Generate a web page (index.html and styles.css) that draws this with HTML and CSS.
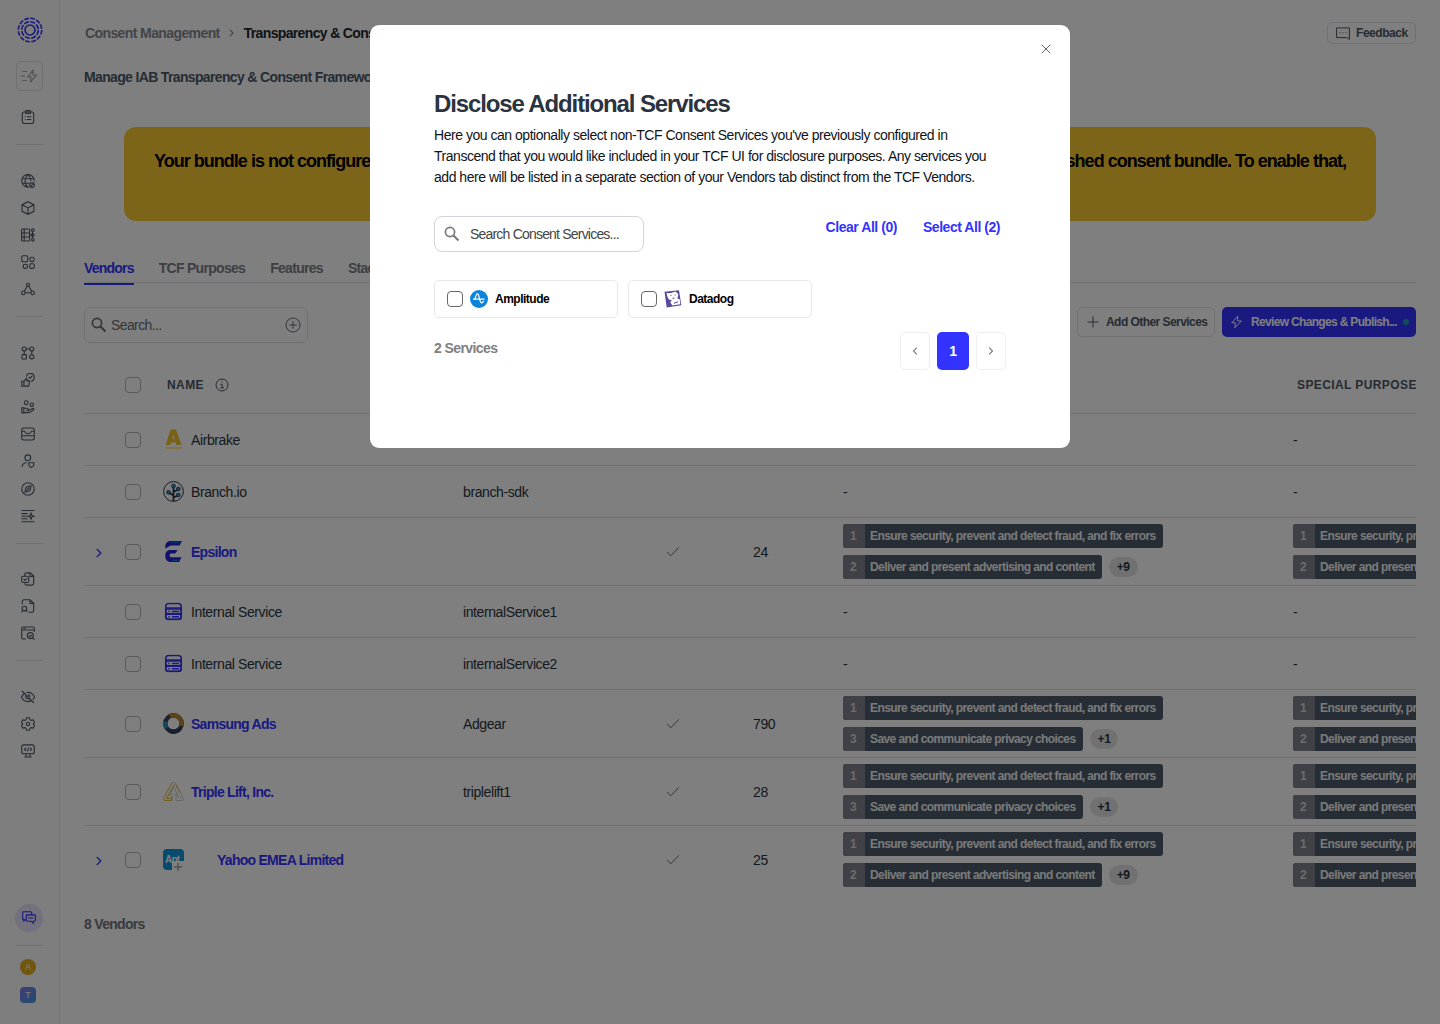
FILE: index.html
```html
<!DOCTYPE html>
<html lang="en">
<head>
  <meta charset="UTF-8">
  <title>Transparency &amp; Consent Framework</title>
  <meta name="viewport" content="width=device-width, initial-scale=1.0">
  <link rel="stylesheet" href="styles.css">
</head>
<body>
  <!-- shared icons -->
  <svg class="defs" width="0" height="0">
    <symbol id="search" viewBox="0 0 16 16"><circle cx="6" cy="6" r="4.6" fill="none" stroke="currentColor" stroke-width="1.7"/><path d="M9.2 9.2L14.5 14.5" fill="none" stroke="currentColor" stroke-width="2"/></symbol>
    <symbol id="bolt" viewBox="0 0 14 14"><path d="M7.8 1.2L1.8 7.8h3.6l-.6 5 6.6-6.8H7.6z" fill="none" stroke="currentColor" stroke-linejoin="round"/></symbol>
    <symbol id="chevron" viewBox="0 0 8 12"><path d="M1.8 2l4 4-4 4" fill="none" stroke="currentColor" stroke-width="1.3"/></symbol>
    <symbol id="tick" viewBox="0 0 14 12"><path d="M1.2 6.2l3.6 3.6 8-8.4" fill="none" stroke="currentColor"/></symbol>
    <symbol id="server" viewBox="0 0 18 18"><g fill="none" stroke="currentColor" stroke-width="1.5"><rect x="1.2" y="1" width="15.6" height="16" rx="3.2"/><rect x="1.2" y="6.4" width="15.6" height="4.8" rx="2.2"/><rect x="1.2" y="11.8" width="15.6" height="5" rx="2.2"/><path d="M1.5 5.6h15M7.5 9h7M7.5 14.3h7M3.8 9h1.4M3.8 14.3h1.4"/></g></symbol>
  </svg>

  <div class="app">
    <aside class="sidebar">
      <svg class="brand" viewBox="0 0 26 26" fill="none" stroke="#3333ff" stroke-width="1.6">
        <circle cx="13" cy="13" r="5"/>
        <circle cx="13" cy="13" r="8.3" stroke-dasharray="5.2 1.32"/>
        <circle cx="13" cy="13" r="11.7" stroke-dasharray="4.6 1.52"/>
      </svg>
      <div class="quick">
        <svg width="20" height="14" viewBox="0 0 20 14" fill="none" stroke="currentColor" stroke-width="1.2"><path d="M2 2.5h5M.5 7h4.5M2 11.5h5M13.4 1L7.8 7.8h3.2l-.6 5.2 6-7h-3.6z" stroke-linejoin="round"/></svg>
      </div>
      <ul class="nav">
        <li><svg viewBox="0 0 14 14"><rect x="1.3" y="2" width="11.4" height="11.5" rx="2"/><rect x="4.3" y=".6" width="5.4" height="2.8" rx="1"/><path d="M3.8 6.7h1M6 6.7h4.3M3.8 9.5h1M6 9.5h4.3"/></svg></li>
      </ul>
      <hr>
      <ul class="nav">
        <li><svg viewBox="0 0 14 14"><path d="M13.3 7.3A6.3 6.3 0 1 0 8 13M7 .7c-4 3.5-4 9 0 12.6M7 .7c2 1.8 3 4 3 6.3M1.2 4.8h11.6M1.2 9.2h7"/><circle cx="11" cy="11" r="2.4"/><path d="M9.6 12.4l2.8-2.8"/></svg></li>
        <li><svg viewBox="0 0 14 14"><path d="M7 .7l5.9 3v6.6L7 13.3l-5.9-3V3.7zM1.1 3.7L7 6.9l5.9-3.2M7 6.9v6.4"/></svg></li>
        <li><svg viewBox="0 0 14 14"><rect x=".6" y="1" width="8" height="12" rx="1"/><path d="M.6 5h8M.6 9h8M3.2 1v12M8.6 7h3M11.5 3.5v7"/><circle cx="11.8" cy="2.2" r="1.3"/><circle cx="11.8" cy="7" r="1.3"/><circle cx="11.8" cy="11.8" r="1.3"/></svg></li>
        <li><svg viewBox="0 0 14 14"><rect x=".8" y=".8" width="6" height="6" rx="1.3"/><rect x="9" y="2.2" width="4" height="4.4" rx="1.6"/><rect x="2.2" y="9.2" width="4.2" height="4.2" rx="1.6"/><rect x="8.7" y="8.8" width="4.6" height="4.6" rx="1.5"/></svg></li>
        <li><svg viewBox="0 0 14 14"><circle cx="7" cy="2.8" r="1.6"/><circle cx="2.4" cy="10.8" r="1.8"/><circle cx="11.6" cy="10.8" r="1.8"/><path d="M6.2 4.3L3.3 9.2M7.8 4.3l2.9 4.9M4.2 10.8h5.6"/></svg></li>
      </ul>
      <hr>
      <ul class="nav">
        <li><svg viewBox="0 0 14 14"><circle cx="3.2" cy="3" r="2"/><circle cx="10.8" cy="3" r="2"/><rect x="1" y="8.6" width="4.4" height="4.4" rx=".6"/><circle cx="10.8" cy="10.8" r="2.1"/><path d="M3.2 5v3.6M10.8 5v3.7M5.2 3h3.6"/></svg></li>
        <li><svg viewBox="0 0 14 14"><path d="M5.3 3.6A4 4 0 1 1 9.8 8.3M7.8 4l1.3 1.2 2.2-2.4M.8 8.2h2.1v5H.8zM2.9 8.6l2.3-3.2c1.2.2 1 1.7.6 2.5h2.7l-.7 5.2H2.9"/></svg></li>
        <li><svg viewBox="0 0 14 14"><circle cx="5.2" cy="2.7" r="1.9"/><circle cx="10.8" cy="4.7" r="1.7"/><path d="M.8 7.7h2v5.2h-2zM2.8 8.3h3l2 1.2c.6.7 0 1.5-1 1.2l-1.5-.4M8 10.2l4-1.9c1.3.2 1.1 1.3.2 1.9l-4 2.5-5.4-.3"/></svg></li>
        <li><svg viewBox="0 0 14 14"><rect x=".7" y="1" width="12.6" height="12" rx="2.2"/><path d="M.9 4.3h2.3c.8 0 1 2.5 3.8 2.5s3-2.5 3.8-2.5h2.3M.7 8.8h12.6"/></svg></li>
        <li><svg viewBox="0 0 14 14"><circle cx="6.8" cy="3.8" r="2.9"/><path d="M1.2 13c0-2.7 1.6-4.3 4.4-4.3M7.8 8.7h5v2c0 1.3-1.2 2.1-2.5 2.7-1.3-.6-2.5-1.4-2.5-2.7z"/></svg></li>
        <li><svg viewBox="0 0 14 14"><circle cx="7" cy="7" r="6.2"/><path d="M10 4L9.2 8l-1.7 1.5L4 10l.8-4 1.7-1.5zM5.5 8.5L8.5 5.5"/></svg></li>
        <li><svg viewBox="0 0 14 14"><path d="M.5 1.5h13M.5 4.6h6M.5 7.2h5M.5 9.8h6M.5 12.8h13M10 4.2l.8 2.2 2.2.8-2.2.8-.8 2.2-.8-2.2L7 7.2l2.2-.8z"/></svg></li>
      </ul>
      <hr>
      <ul class="nav">
        <li><svg viewBox="0 0 14 14"><rect x=".7" y="4.2" width="7" height="6.3" rx="1.5"/><path d="M3.7 4V2.5C3.7 1.5 4.3.9 5.3.9h4l3.4 3.2v7.2c0 1.1-.7 1.8-1.8 1.8H5.5c-1 0-1.7-.6-1.8-1.8M9 1v3.4h3.4M2.6 7.2l1.3 1.3 2.2-2.4"/></svg></li>
        <li><svg viewBox="0 0 14 14"><path d="M1.3 5.5V2.5C1.3 1.5 2 .8 3 .8h6l3.7 3.5v7.2c0 1-.7 1.7-1.7 1.7H7.5M9 1v3.4h3.6"/><circle cx="3.4" cy="9.6" r="2.3"/><path d="M1.8 11.3L.6 13.4M5.2 11.3l1 1.7"/></svg></li>
        <li><svg viewBox="0 0 14 14"><path d="M5 13H2.2C1.3 13 .7 12.4.7 11.5V2.5C.7 1.7 1.3 1 2.2 1h9.6c.9 0 1.5.7 1.5 1.5V6M.7 4h12.6M2.5 2.5h2"/><circle cx="9.3" cy="9.6" r="3"/><path d="M11.5 11.9l2 1.8M8 9.7l1 .9 1.6-1.8"/></svg></li>
      </ul>
      <hr>
      <ul class="nav">
        <li><svg viewBox="0 0 14 14"><path d="M1 1l12 12M4 3.3C2.3 4.2 1 5.8.5 7c1 2.5 3.5 4.6 6.5 4.6 1.2 0 2.3-.3 3.2-.8M5.5 2.6C9 1.7 12.3 4 13.5 7c-.3.8-.9 1.7-1.7 2.5M5 5.5c-.8 1.6.2 3.5 2 3.5.8 0 1.3-.3 1.7-.8M7 4.9c1.2 0 2 .9 2 2"/></svg></li>
        <li><svg viewBox="0 0 14 14"><circle cx="7" cy="7" r="1.7"/><path d="M5.6.8h2.8l.6 1.9 1.2.7 2-.5 1.4 2.4L12.2 7l1.4 1.7-1.4 2.4-2-.5-1.2.7-.6 1.9H5.6L5 11.3l-1.2-.7-2 .5L.4 8.7 1.8 7 .4 5.3l1.4-2.4 2 .5L5 2.7z"/></svg></li>
        <li><svg viewBox="0 0 14 14"><rect x=".7" y=".9" width="12.6" height="8.8" rx="2"/><path d="M5 3.8L3.5 5.3 5 6.8M9 3.8l1.5 1.5L9 6.8M7.7 3.5l-1.4 3.7M5 9.7v2.8M9 9.7v2.8M3.3 13h7.4"/></svg></li>
      </ul>
      <div class="sidebar-bottom">
        <div class="chat">
          <svg width="14" height="14" viewBox="0 0 14 14" fill="none" stroke="currentColor" stroke-width="1.1"><path d="M3.5 8.5L1.8 10V8.5C1 8.5.7 8.2.7 7.5V1.7C.7 1 1 .7 1.7.7h7c.7 0 1 .3 1 1v2M5.2 3.9h7.3c.6 0 .9.3.9.9V9.3c0 .6-.3.9-.9.9h-1.2v2L9.2 10.2h-4c-.6 0-.9-.3-.9-.9V4.8c0-.6.3-.9.9-.9zM6.3 7h5"/></svg>
        </div>
        <hr>
        <div class="avatar">A</div>
        <div class="org">T</div>
      </div>
    </aside>

    <main class="main">
      <div class="topbar">
        <div class="breadcrumb">
          <span>Consent Management</span>
          <svg width="7" height="10"><use href="#chevron"/></svg>
          <strong>Transparency &amp; Consent Framework</strong>
        </div>
        <button class="btn feedback">
          <svg width="14" height="13" viewBox="0 0 14 13" fill="none" stroke="currentColor"><path d="M.6.9h12.8v11.4l-2.6-1.7H.6zM4 5.3v1M7 5.3v1M10 5.3v1"/></svg>
          Feedback
        </button>
      </div>
      <p class="description">Manage IAB Transparency &amp; Consent Framework</p>

      <div class="banner">
        <span>Your bundle is not configured</span>
        <span>published consent bundle. To enable that,</span>
      </div>

      <nav class="tabs">
        <a class="active">Vendors</a>
        <a>TCF Purposes</a>
        <a>Features</a>
        <a>Stacks</a>
      </nav>

      <div class="toolbar">
        <div class="search">
          <svg width="16" height="16"><use href="#search"/></svg>
          <span>Search...</span>
          <svg width="16" height="16" viewBox="0 0 16 16" fill="none" stroke="currentColor"><circle cx="8" cy="8" r="7"/><path d="M8 4.2v7.6M4.2 8h7.6"/></svg>
        </div>
        <div class="actions">
          <button class="btn add">
            <svg width="12" height="12" viewBox="0 0 12 12" stroke="currentColor"><path d="M6 .5v11M.5 6h11"/></svg>
            Add Other Services
          </button>
          <button class="btn publish">
            <svg width="14" height="14"><use href="#bolt"/></svg>
            Review Changes &amp; Publish...
            <i class="dot"></i>
          </button>
        </div>
      </div>

      <div class="table">
        <div class="row head">
          <div></div>
          <div><span class="check"></span></div>
          <div class="head-name">NAME
            <svg width="14" height="14" viewBox="0 0 14 14" fill="none" stroke="currentColor"><circle cx="7" cy="7" r="6"/><path d="M5.5 6.3h1.7v3.5M5.3 9.9h3.6M6.6 3.9h1"/></svg>
          </div>
          <div></div><div></div><div></div><div></div>
          <div class="head-special">SPECIAL PURPOSES</div>
        </div>
        <div class="row">
          <div></div>
          <div><span class="check"></span></div>
          <div class="name">
            <svg class="logo" viewBox="0 0 21 21"><path d="M7.500 .5h5.500l5.500 15.500h-5l-.8-2.500H8.300L7.500 16H2.800zM10.500 5.500L9.300 10h2.400z" fill="#f2c230" fill-rule="evenodd"/><path d="M3 19h15.500" stroke="#f2c230" stroke-width="1.6" stroke-dasharray="1.5 .5" opacity=".7"/></svg>
            Airbrake
          </div>
          <div></div><div></div><div></div>
          <div>-</div>
          <div>-</div>
        </div>
        <div class="row">
          <div></div>
          <div><span class="check"></span></div>
          <div class="name">
            <svg class="logo" viewBox="0 0 21 21" fill="none" stroke="#2a3440"><circle cx="10.5" cy="10.5" r="9.9"/><path d="M10.5 20V6M10.5 14.5L5.5 11.5M10.5 11l4.500-2.500M10.500 16.500l4.500-2" stroke-width="1.8"/><g fill="#1f9bd6" stroke-width=".8"><circle cx="10.5" cy="5" r="1.9"/><circle cx="5.5" cy="11.3" r="1.9"/><circle cx="15.3" cy="8" r="1.9"/><circle cx="15.3" cy="14" r="1.9"/></g></svg>
            Branch.io
          </div>
          <div>branch-sdk</div>
          <div></div><div></div>
          <div>-</div>
          <div>-</div>
        </div>
        <div class="row tall">
          <div class="expand"><svg width="8" height="12"><use href="#chevron"/></svg></div>
          <div><span class="check"></span></div>
          <div class="name link">
            <svg class="logo" viewBox="0 0 21 21" fill="#2424d8"><path d="M8 0h11l-2.500 4.500H8.500C6.500 4.500 5.500 6 2.300 7.500V5.500C2.300 2 4.500 0 8 0z"/><path d="M7.500 9h7L12.300 12.500H8c-1.300 0-1.300 1-1.300 2s.5 1.800 1.800 1.800H18.500L16.200 21H8c-3.700 0-5.700-2.200-5.700-6S4 9 7.500 9z"/><path d="M8 1.500h8.500M9 19.300h6.500" stroke="#1c6fe0" stroke-width="1.2"/></svg>
            Epsilon
          </div>
          <div></div>
          <div class="tick"><svg width="14" height="12"><use href="#tick"/></svg></div>
          <div>24</div>
          <div class="chips">
            <div class="chip"><b>1</b><span>Ensure security, prevent and detect fraud, and fix errors</span></div>
            <div class="chip-line"><div class="chip"><b>2</b><span>Deliver and present advertising and content</span></div><span class="more">+9</span></div>
          </div>
          <div class="chips">
            <div class="chip"><b>1</b><span>Ensure security, prevent and detect fraud, and fix errors</span></div>
            <div class="chip"><b>2</b><span>Deliver and present advertising and content</span></div>
          </div>
        </div>
        <div class="row">
          <div></div>
          <div><span class="check"></span></div>
          <div class="name">
            <svg class="logo server" viewBox="0 0 21 21"><use href="#server" x="1.5" y="1.5" width="18" height="18"/></svg>
            Internal Service
          </div>
          <div>internalService1</div>
          <div></div><div></div>
          <div>-</div>
          <div>-</div>
        </div>
        <div class="row">
          <div></div>
          <div><span class="check"></span></div>
          <div class="name">
            <svg class="logo server" viewBox="0 0 21 21"><use href="#server" x="1.5" y="1.5" width="18" height="18"/></svg>
            Internal Service
          </div>
          <div>internalService2</div>
          <div></div><div></div>
          <div>-</div>
          <div>-</div>
        </div>
        <div class="row tall">
          <div></div>
          <div><span class="check"></span></div>
          <div class="name link">
            <svg class="logo" viewBox="0 0 21 21" fill="none" stroke-width="4.4"><circle cx="10.5" cy="10.5" r="8.2" stroke="#3d4660"/><path d="M7 3.1a8.2 8.2 0 0 1 11.3 9.7" stroke="#b8862a"/><path d="M2.5 8.5a8.2 8.2 0 0 0 1 6.3" stroke="#2a8fc0"/><path d="M17.5 14.8a8.2 8.2 0 0 1-11 2.9" stroke="#33415e"/></svg>
            Samsung Ads
          </div>
          <div>Adgear</div>
          <div class="tick"><svg width="14" height="12"><use href="#tick"/></svg></div>
          <div>790</div>
          <div class="chips">
            <div class="chip"><b>1</b><span>Ensure security, prevent and detect fraud, and fix errors</span></div>
            <div class="chip-line"><div class="chip"><b>3</b><span>Save and communicate privacy choices</span></div><span class="more">+1</span></div>
          </div>
          <div class="chips">
            <div class="chip"><b>1</b><span>Ensure security, prevent and detect fraud, and fix errors</span></div>
            <div class="chip"><b>2</b><span>Deliver and present advertising and content</span></div>
          </div>
        </div>
        <div class="row tall">
          <div></div>
          <div><span class="check"></span></div>
          <div class="name link">
            <svg class="logo" viewBox="0 0 21 21" fill="none"><path d="M9 1.5h3l8.5 16-1 2H13v-4.5h2.3L10.5 6 6 15" stroke="#cfcfcf"/><path d="M13 15v-3M9 19.5v-7M15 15l4 2.5" stroke="#cfcfcf"/><path d="M9 1.5L.6 17.5l1 2H8.5V15.5M11 3.5L3.5 17.5H8M12.5 3.5l4.5 8" stroke="#e6bc3c"/></svg>
            Triple Lift, Inc.
          </div>
          <div>triplelift1</div>
          <div class="tick"><svg width="14" height="12"><use href="#tick"/></svg></div>
          <div>28</div>
          <div class="chips">
            <div class="chip"><b>1</b><span>Ensure security, prevent and detect fraud, and fix errors</span></div>
            <div class="chip-line"><div class="chip"><b>3</b><span>Save and communicate privacy choices</span></div><span class="more">+1</span></div>
          </div>
          <div class="chips">
            <div class="chip"><b>1</b><span>Ensure security, prevent and detect fraud, and fix errors</span></div>
            <div class="chip"><b>2</b><span>Deliver and present advertising and content</span></div>
          </div>
        </div>
        <div class="row tall">
          <div class="expand"><svg width="8" height="12"><use href="#chevron"/></svg></div>
          <div><span class="check"></span></div>
          <div class="name link">
            <span class="app-logo">Apt<svg width="12" height="12" viewBox="0 0 12 12"><rect width="12" height="12" fill="#fff"/><path d="M6 2v8M2 6h8" stroke="#a8a8b0" stroke-width="1.5"/></svg></span>
            Yahoo EMEA Limited
          </div>
          <div></div>
          <div class="tick"><svg width="14" height="12"><use href="#tick"/></svg></div>
          <div>25</div>
          <div class="chips">
            <div class="chip"><b>1</b><span>Ensure security, prevent and detect fraud, and fix errors</span></div>
            <div class="chip-line"><div class="chip"><b>2</b><span>Deliver and present advertising and content</span></div><span class="more">+9</span></div>
          </div>
          <div class="chips">
            <div class="chip"><b>1</b><span>Ensure security, prevent and detect fraud, and fix errors</span></div>
            <div class="chip"><b>2</b><span>Deliver and present advertising and content</span></div>
          </div>
        </div>
      </div>
      <div class="total">8 Vendors</div>
    </main>
  </div>

  <div class="overlay">
    <div class="modal">
      <button class="close"><svg width="10" height="10" viewBox="0 0 10 10" stroke="currentColor"><path d="M.8.8l8.4 8.4M9.2.8L.8 9.2"/></svg></button>
      <h2>Disclose Additional Services</h2>
      <p>Here you can optionally select non-TCF Consent Services you've previously configured in<br>Transcend that you would like included in your TCF UI for disclosure purposes. Any services you<br>add here will be listed in a separate section of your Vendors tab distinct from the TCF Vendors.</p>
      <div class="modal-bar">
        <div class="modal-search">
          <svg width="16" height="16"><use href="#search"/></svg>
          Search Consent Services...
        </div>
        <div class="bulk">
          <a>Clear All (0)</a>
          <a>Select All (2)</a>
        </div>
      </div>
      <div class="cards">
        <div class="card">
          <span class="check"></span>
          <svg width="18" height="18" viewBox="0 0 18 18"><circle cx="9" cy="9" r="9" fill="#0a84dc"/><path d="M3 9.2h11.5M4.8 9.2C5.8 6.5 6.5 3.7 7.5 3.7c1.500 0 2 8.500 4 9.300 1 0 1.600-1.200 2.300-2.200" fill="none" stroke="#fff" stroke-width="1.2"/></svg>
          Amplitude
        </div>
        <div class="card">
          <span class="check"></span>
          <svg width="18" height="18" viewBox="0 0 18 18"><path d="M.5 1.8L15 .2l2.3 15-14.6 2.3z" fill="#5a489b"/><path d="M2.5 3l3.500.2L11.500 1.500l2.800 2.800-.8 4.500 2.200.5.6 4.900-8 1.300-2-3.200 1.500-2.300-2.700-.2L3.500 7z" fill="#fff"/><path d="M6.500 5.500h1M10.700 5h1M8.500 8.500l2-.5M10 13.300l4-1.500" stroke="#5a489b"/></svg>
          Datadog
        </div>
      </div>
      <div class="modal-foot">
        <span class="count">2 Services</span>
        <div class="pager">
          <button class="prev"><svg width="8" height="10"><use href="#chevron"/></svg></button>
          <button class="current">1</button>
          <button><svg width="8" height="10"><use href="#chevron"/></svg></button>
        </div>
      </div>
    </div>
  </div>
</body>
</html>
```
FILE: styles.css
```css
* {
  box-sizing: border-box;
}
body {
  margin: 0;
  height: 1024px;
  overflow: hidden;
  font-family: "Liberation Sans", Arial, sans-serif;
  font-size: 14px;
  letter-spacing: -0.4px;
  color: #2a3440;
  background: #fff;
}
svg {
  display: block;
  flex-shrink: 0;
}
button {
  font: inherit;
  letter-spacing: inherit;
  color: inherit;
  padding: 0;
  background: none;
  border: none;
}
.defs {
  position: absolute;
}
.app {
  display: flex;
  height: 1024px;
}

.breadcrumb, .description, .banner, .tabs, .btn, .head, .link, .chip, .more,
.total, .modal h2, .bulk, .card, .count, .pager .current {
  font-weight: bold;
}

/* sidebar */
.sidebar {
  width: 60px;
  flex-shrink: 0;
  border-right: 1px solid #e4e4e6;
  background: #fcfcfc;
  display: flex;
  flex-direction: column;
  padding-top: 17px;
}
.brand {
  width: 26px;
  height: 26px;
  margin-left: 17px;
}
.quick {
  width: 27px;
  height: 30px;
  margin: 18px 0 12.8px 16px;
  border: 1px solid #dedee2;
  border-radius: 5px;
  color: #a9abb2;
  display: flex;
  align-items: center;
  justify-content: center;
}
.nav {
  list-style: none;
  margin: 0;
  padding: 0;
  width: 56px;
  color: #4c5866;
}
.nav li {
  height: 27.2px;
  display: flex;
  align-items: center;
  justify-content: center;
}
.nav svg {
  width: 14px;
  height: 14px;
  fill: none;
  stroke: currentColor;
  stroke-width: 1.1;
}
.sidebar hr {
  width: 27px;
  height: 1px;
  border: none;
  background: #dcdce0;
  margin: 13.4px 0 21.7px 16px;
  flex-shrink: 0;
}
.sidebar-bottom {
  margin-top: auto;
  padding-bottom: 21px;
}
.chat {
  width: 28px;
  height: 28px;
  margin-left: 15px;
  border-radius: 50%;
  background: #e4e2fa;
  color: #3333ff;
  display: flex;
  align-items: center;
  justify-content: center;
}
.sidebar-bottom hr {
  margin: 13px 0 13px 16px;
}
.avatar, .org {
  width: 16px;
  height: 16px;
  margin-left: 20px;
  border-radius: 50%;
  background: #e0ac1c;
  color: #fff;
  font-size: 9px;
  line-height: 16px;
  text-align: center;
  letter-spacing: 0;
}
.org {
  margin-top: 12px;
  border-radius: 4px;
  background: linear-gradient(135deg, #8a78e8, #3c9be0);
}

/* main */
.main {
  flex: 1;
  min-width: 0;
  padding: 22px 24px 0;
}
.topbar {
  display: flex;
  justify-content: space-between;
  align-items: center;
  height: 22px;
}
.breadcrumb {
  display: flex;
  align-items: center;
  gap: 8px;
  padding-left: 1px;
  color: #85888f;
  letter-spacing: -0.6px;
}
.breadcrumb strong {
  color: #20262e;
  letter-spacing: -0.65px;
}
.breadcrumb svg {
  margin: 0 1px 0 0;
}
.btn {
  display: flex;
  align-items: center;
  height: 30px;
  border: 1px solid #e2e2e6;
  border-radius: 5px;
  font-size: 12px;
  font-weight: bold;
  letter-spacing: -0.45px;
  white-space: nowrap;
  color: #4c5866;
}
.feedback {
  width: 89px;
  height: 22px;
  padding-left: 8px;
  gap: 6px;
}
.description {
  margin: 25px 0 0;
  line-height: 16px;
  color: #4c5866;
  letter-spacing: -0.65px;
}
.banner {
  margin: 42px 40px 0;
  height: 94px;
  padding: 24px 30px 0;
  border-radius: 12px;
  background: #f9c933;
  color: #000;
  font-size: 18px;
  line-height: 20px;
  letter-spacing: -0.98px;
  display: flex;
  justify-content: space-between;
}
.tabs {
  display: flex;
  gap: 25px;
  height: 62px;
  padding-top: 39px;
  border-bottom: 1px solid #e0e0e4;
  color: #7c8088;
  letter-spacing: -0.7px;
}
.tabs a {
  height: 25px;
  line-height: 16px;
}
.tabs .active {
  color: #3333ff;
  border-bottom: 2px solid #3333ff;
  letter-spacing: -0.8px;
}
.toolbar {
  display: flex;
  justify-content: space-between;
  margin-top: 24px;
}
.search {
  width: 224px;
  height: 36px;
  padding: 0 6px;
  border: 1px solid #e0e0e4;
  border-radius: 6px;
  display: flex;
  align-items: center;
  color: #666c75;
  letter-spacing: -0.6px;
}
.search span {
  flex: 1;
  margin-left: 4px;
}
.actions {
  display: flex;
  gap: 7px;
}
.add {
  width: 138px;
  padding-left: 9px;
  gap: 7px;
  letter-spacing: -0.55px;
}
.publish {
  width: 194px;
  padding-left: 8px;
  gap: 7px;
  border: none;
  background: #3333ff;
  color: #fff;
  letter-spacing: -0.67px;
}
.dot {
  width: 6px;
  height: 6px;
  margin-left: -1px;
  border-radius: 50%;
  background: #20a0a8;
}

/* vendors table */
.table {
  margin-top: 14px;
  overflow: hidden;
}
.row {
  display: grid;
  grid-template-columns: 41px 38px 300px 203px 87px 90px 450px 450px;
  align-items: center;
  width: 1659px;
  height: 52px;
  border-bottom: 1px solid #e0e0e4;
}
.row.head {
  height: 57px;
  font-size: 12px;
  letter-spacing: 0.4px;
  color: #4c5866;
}
.row.tall {
  height: 68px;
}
.row:last-child {
  border-bottom-color: transparent;
}
.check {
  display: block;
  width: 16px;
  height: 16px;
  border: 1px solid #b4b4ba;
  border-radius: 4px;
}
.head-name {
  display: flex;
  align-items: center;
  gap: 11px;
  padding-left: 4px;
}
.head-special {
  padding-left: 4px;
}
.name {
  display: flex;
  align-items: center;
  gap: 7px;
}
.logo {
  width: 21px;
  height: 21px;
}
.server {
  color: #3333ff;
}
.link {
  color: #3333ff;
  letter-spacing: -0.73px;
}
.app-logo {
  position: relative;
  width: 21px;
  height: 21px;
  margin-right: 26px;
  padding-left: 2px;
  border-radius: 4px;
  background: #0f96dc;
  color: #fff;
  font-size: 10px;
  line-height: 21px;
}
.app-logo svg {
  position: absolute;
  left: 9px;
  top: 12px;
}
.expand {
  color: #3333ff;
  padding: 2px 0 0 11px;
}
.tick {
  color: #666c75;
}
.chips {
  display: flex;
  flex-direction: column;
  align-items: flex-start;
  gap: 7px;
}
.chip-line {
  display: flex;
  align-items: center;
  gap: 7px;
}
.chip {
  display: flex;
  height: 24px;
  line-height: 25px;
  border-radius: 3px;
  overflow: hidden;
  background: #4c5a68;
  color: #f4f4f4;
  font-size: 12px;
  letter-spacing: -0.59px;
  white-space: nowrap;
}
.chip b {
  width: 22px;
  padding-left: 7px;
  background: #7e828e;
  color: #d8d8d8;
}
.chip span {
  padding: 0 7px 0 5px;
}
.more {
  padding: 0 8px;
  height: 20px;
  line-height: 20px;
  border-radius: 10px;
  background: #e2e2e2;
  font-size: 12px;
}
.total {
  margin-top: 22px;
  line-height: 16px;
  color: #70747c;
  letter-spacing: -0.7px;
}

/* dialog */
.overlay {
  position: fixed;
  inset: 0;
  background: rgba(0, 0, 0, 0.5);
  display: flex;
  align-items: flex-start;
  justify-content: center;
  padding-top: 24.5px;
}
.modal {
  position: relative;
  width: 700px;
  height: 423px;
  padding: 64px 64px 0;
  border-radius: 9px;
  background: #fff;
  color: #101418;
}
.close {
  position: absolute;
  top: 19px;
  right: 19px;
  color: #666;
}
.modal h2 {
  margin: 0;
  font-size: 24px;
  line-height: 30px;
  letter-spacing: -1.13px;
  color: #2a3440;
}
.modal p {
  margin: 6px 0 0;
  line-height: 21px;
  letter-spacing: -0.47px;
  white-space: nowrap;
}
.modal-bar {
  display: flex;
  justify-content: space-between;
  margin-top: 28px;
}
.modal-search {
  width: 210px;
  height: 36px;
  padding-left: 9px;
  border: 1px solid #d4d4da;
  border-radius: 8px;
  display: flex;
  align-items: center;
  gap: 10px;
  color: #444;
  letter-spacing: -0.8px;
}
.modal-search svg {
  color: #777;
}
.bulk {
  display: flex;
  gap: 26px;
  padding: 3px 6px 0 0;
  line-height: 16px;
  color: #3333ff;
  letter-spacing: -0.46px;
}
.cards {
  display: flex;
  gap: 10.5px;
  margin-top: 28px;
}
.card {
  width: 183.5px;
  height: 38px;
  padding-left: 12px;
  border: 1px solid #e8e8e8;
  border-radius: 5px;
  display: flex;
  align-items: center;
  gap: 7px;
  font-size: 12px;
  letter-spacing: -0.5px;
  color: #000;
}
.card .check {
  border-color: #666;
}
.modal-foot {
  display: flex;
  justify-content: space-between;
  margin-top: 14px;
}
.count {
  padding-top: 8px;
  line-height: 16px;
  color: #808080;
  letter-spacing: -0.58px;
}
.pager {
  display: flex;
  gap: 7px;
}
.pager button {
  width: 30px;
  height: 38px;
  border: 1px solid #eee;
  border-radius: 5px;
  color: #777;
  display: flex;
  align-items: center;
  justify-content: center;
}
.pager .prev svg {
  transform: scaleX(-1);
}
.pager .current {
  width: 32px;
  border: none;
  background: #3333ff;
  color: #fff;
}
```
